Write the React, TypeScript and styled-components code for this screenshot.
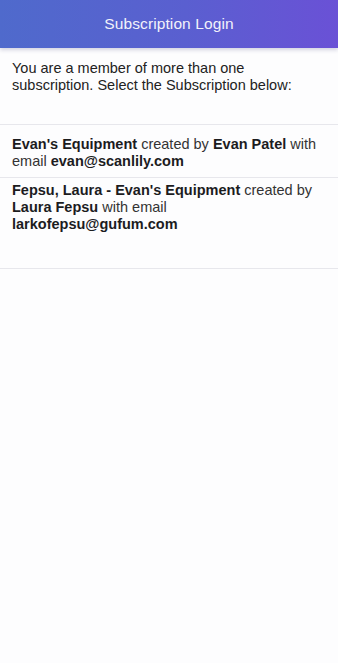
import React from "react";
import styled, { createGlobalStyle } from "styled-components";

const GlobalStyle = createGlobalStyle`
  html, body {
    margin: 0;
    padding: 0;
    background: #fdfdfe;
  }
  body {
    font-family: "Liberation Sans", Arial, sans-serif;
    color: #1c1c1e;
  }
`;

const subscriptions = [
  {
    name: "Evan's Equipment",
    owner: "Evan Patel",
    email: "evan@scanlily.com",
    tall: false,
  },
  {
    name: "Fepsu, Laura - Evan's Equipment",
    owner: "Laura Fepsu",
    email: "larkofepsu@gufum.com",
    tall: true,
  },
];

function App() {
  return (
    <Wrap>
      <GlobalStyle />
      <Header>
        <HeaderTitle>Subscription Login</HeaderTitle>
      </Header>
      <Intro>
        You are a member of more than one subscription. Select the Subscription
        below:
      </Intro>
      <List>
        {subscriptions.map((s) => (
          <Item key={s.email} $tall={s.tall}>
            <b>{s.name}</b> created by <b>{s.owner}</b> with email{" "}
            <b>{s.email}</b>
          </Item>
        ))}
      </List>
    </Wrap>
  );
}

export default App;

const Wrap = styled.div`
  min-height: 663px;
  background: #fdfdfe;
`;
const Header = styled.header`
  height: 48px;
  display: flex;
  align-items: center;
  justify-content: center;
  background: linear-gradient(90deg, #4f6acc 0%, #5a5fd0 55%, #6a51d6 100%);
  box-shadow: 0 2px 4px rgba(60, 60, 120, 0.22);
  position: relative;
`;
const HeaderTitle = styled.h1`
  margin: 0;
  font-size: 15.5px;
  font-weight: 400;
  color: #f2f2fb;
  letter-spacing: 0.1px;
`;
const Intro = styled.p`
  margin: 0;
  padding: 12px 20px 30px 12px;
  font-size: 14.5px;
  line-height: 17px;
  color: #222;
  border-bottom: 1px solid #e7e7ec;
`;
const List = styled.div`
  display: flex;
  flex-direction: column;
`;
const Item = styled.div<{ $tall: boolean }>`
  padding: ${(p) => (p.$tall ? "4px 16px 35px 12px" : "11px 16px 7px 12px")};
  font-size: 14.5px;
  line-height: 17px;
  color: #333;
  border-bottom: 1px solid #e7e7ec;
  b {
    font-weight: 700;
    color: #1c1c1e;
  }
`;
